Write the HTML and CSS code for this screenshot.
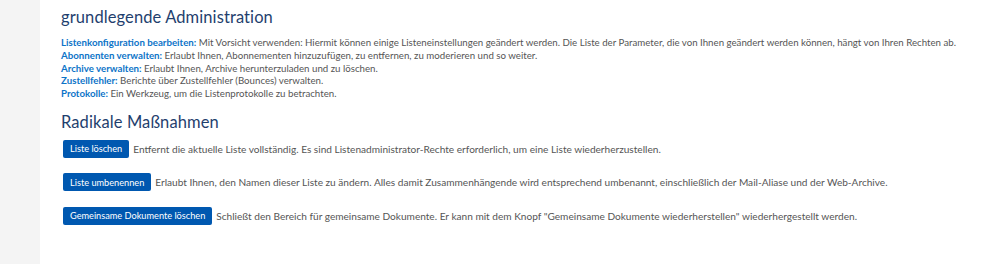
FILE: index.html
```html
<!DOCTYPE html>
<html lang="de">
<head>
    <meta charset="UTF-8">
    <title>Listenadministration</title>
    <link rel="stylesheet" href="styles.css">
</head>
<body>
    <aside class="side"></aside>
    <main class="content">
        <h2 class="title">grundlegende Administration</h2>
        <ul class="admin-list">
            <li><a href="#">Listenkonfiguration bearbeiten:</a> Mit Vorsicht verwenden: Hiermit können einige Listeneinstellungen geändert werden. Die Liste der Parameter, die von Ihnen geändert werden können, hängt von Ihren Rechten ab.</li>
            <li><a href="#">Abonnenten verwalten:</a> Erlaubt Ihnen, Abonnementen hinzuzufügen, zu entfernen, zu moderieren und so weiter.</li>
            <li><a href="#">Archive verwalten:</a> Erlaubt Ihnen, Archive herunterzuladen und zu löschen.</li>
            <li><a href="#">Zustellfehler:</a> Berichte über Zustellfehler (Bounces) verwalten.</li>
            <li><a href="#">Protokolle:</a> Ein Werkzeug, um die Listenprotokolle zu betrachten.</li>
        </ul>

        <h2 class="title title-2">Radikale Maßnahmen</h2>
        <div class="action">
            <button class="btn">Liste löschen</button>
            <span>Entfernt die aktuelle Liste vollständig. Es sind Listenadministrator-Rechte erforderlich, um eine Liste wiederherzustellen.</span>
        </div>
        <div class="action">
            <button class="btn">Liste umbenennen</button>
            <span>Erlaubt Ihnen, den Namen dieser Liste zu ändern. Alles damit Zusammenhängende wird entsprechend umbenannt, einschließlich der Mail-Aliase und der Web-Archive.</span>
        </div>
        <div class="action">
            <button class="btn">Gemeinsame Dokumente löschen</button>
            <span>Schließt den Bereich für gemeinsame Dokumente. Er kann mit dem Knopf "Gemeinsame Dokumente wiederherstellen" wiederhergestellt werden.</span>
        </div>
    </main>
</body>
</html>
```

FILE: styles.css
```css
* {
    margin: 0;
    padding: 0;
    box-sizing: border-box;
}

body {
    display: flex;
    min-height: 264px;
    background-color: #fff;
    font-family: "Lato", "Open Sans", sans-serif;
    color: #555;
}

.side {
    width: 40px;
    flex-shrink: 0;
    background-color: #f4f4f4;
}

.content {
    flex: 1;
    padding: 6px 0 0 21px;
}

.title {
    font-size: 16.5px;
    font-weight: 400;
    line-height: 22px;
    color: #1f3f6e;
    letter-spacing: 0.1px;
}

.title-2 {
    margin-top: 11px;
}

.admin-list {
    list-style: none;
    margin-top: 8px;
    font-size: 9.7px;
    line-height: 12.8px;
}

.admin-list a {
    color: #0d74c8;
    font-weight: 700;
    text-decoration: none;
}

.action {
    display: flex;
    align-items: center;
    gap: 4px;
    margin-top: 15.5px;
    font-size: 10.1px;
}

.action:first-of-type {
    margin-top: 7px;
}

.btn {
    height: 18px;
    padding: 0 7px;
    margin-left: 2px;
    border: none;
    border-radius: 2px;
    background-color: #0058b0;
    color: #fff;
    font-family: inherit;
    font-size: 9.2px;
    cursor: pointer;
}
```
